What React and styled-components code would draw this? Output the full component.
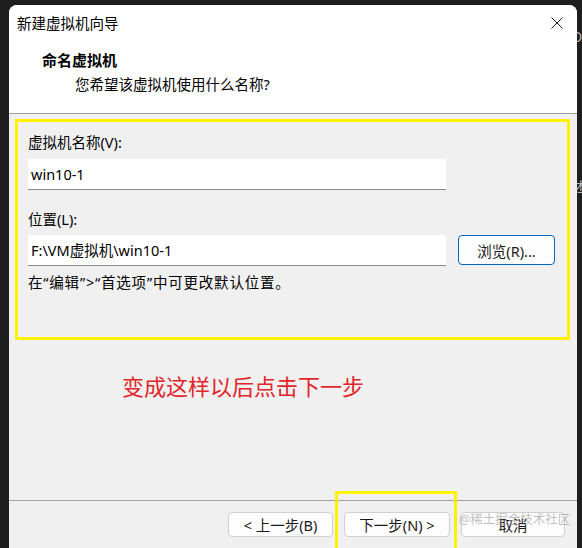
import React from "react";
import styled, { createGlobalStyle } from "styled-components";

const Global = createGlobalStyle`
  html, body { margin: 0; padding: 0; background: #1e1e1e; }
  body { font-family: "Noto Sans", "Noto Sans CJK SC", sans-serif; }
`;

const Desktop = styled.div`
  position: relative;
  width: 582px;
  height: 548px;
  overflow: hidden;
  background: #1e1e1e;
  padding: 5px 0 0 9px;
  box-sizing: border-box;
`;

const BackdropGlyph = styled.span`
  position: absolute;
  left: ${(p) => p.$x}px;
  top: ${(p) => p.$y}px;
  color: #b8b8b8;
  font-size: 14px;
  line-height: 1;
`;

const Dialog = styled.div`
  position: relative;
  z-index: 1;
  width: 568px;
  height: 560px;
  border-radius: 8px 8px 0 0;
  background: #f0f0f0;
  overflow: hidden;
  display: flex;
  flex-direction: column;
  color: #000;
  font-size: 14.5px;
`;

const TitleBar = styled.div`
  height: 36px;
  background: #fff;
  display: flex;
  align-items: center;
  justify-content: space-between;
  padding: 0 14px 0 8px;
`;

const TitleText = styled.span`
  font-size: 14.5px;
  line-height: 20px;
`;

const CloseIcon = styled.svg`
  width: 12px;
  height: 12px;
  display: block;
`;

const Header = styled.div`
  background: #fff;
  padding: 9px 0 19px 33px;
  border-bottom: 1px solid #a0a0a0;
  display: flex;
  flex-direction: column;
  gap: 4px;
`;

const HeaderTitle = styled.div`
  font-weight: 700;
  font-size: 15px;
  line-height: 20px;
`;

const HeaderSub = styled.div`
  padding-left: 33px;
  font-size: 14.5px;
  line-height: 20px;
`;

const Body = styled.div`
  flex: 1;
  display: flex;
  flex-direction: column;
  padding: 5px 0 0 6px;
`;

const Highlight = styled.div`
  width: 555px;
  height: 221px;
  box-sizing: border-box;
  border: 3px solid #fff200;
  padding: 10px 0 0 10px;
  display: flex;
  flex-direction: column;
`;

const Label = styled.div`
  line-height: 20px;
  margin-top: ${(p) => p.$mt || 0}px;
`;

const Row = styled.div`
  display: flex;
  align-items: flex-start;
  gap: 12px;
  margin-top: ${(p) => p.$mt || 0}px;
`;

const Field = styled.div`
  width: 415px;
  height: 30px;
  background: #fff;
  border-bottom: 1px solid #8a8a8a;
  display: flex;
  align-items: center;
  padding-left: 3px;
  box-sizing: content-box;
  line-height: 20px;
`;

const Button = styled.div`
  width: ${(p) => p.$w}px;
  height: ${(p) => p.$h}px;
  box-sizing: border-box;
  border: 1px solid ${(p) => (p.$primary ? "#0067c0" : "#d0d0d0")};
  border-radius: 4px;
  background: #fdfdfd;
  display: flex;
  align-items: center;
  justify-content: center;
  font-size: 14.5px;
  color: #1a1a1a;
`;

const Hint = styled.div`
  line-height: 20px;
  margin-top: 6px;
  letter-spacing: 0.8px;
`;

const Annotation = styled.div`
  color: #e0262a;
  font-size: 22px;
  line-height: 30px;
  margin: 31px 0 0 107px;
`;

const Footer = styled.div`
  position: relative;
  border-top: 1px solid #a0a0a0;
  height: 53px;
  display: flex;
  justify-content: flex-end;
  align-items: flex-start;
  gap: 11px;
  padding: 11px 12px 0 0;
`;

const NextHighlight = styled.div`
  position: absolute;
  left: 326px;
  top: -10px;
  width: 122px;
  height: 80px;
  box-sizing: border-box;
  border: 3px solid #fff200;
  pointer-events: none;
`;

const Watermark = styled.div`
  position: absolute;
  left: 450px;
  top: 10px;
  font-size: 12.5px;
  line-height: 18px;
  color: rgba(150, 150, 150, 0.6);
  white-space: nowrap;
`;

export default function App() {
  return (
    <>
      <Global />
      <Desktop>
        <BackdropGlyph $x={572} $y={30}>D</BackdropGlyph>
        <BackdropGlyph $x={572} $y={180}>述</BackdropGlyph>
        <Dialog>
          <TitleBar>
            <TitleText>新建虚拟机向导</TitleText>
            <CloseIcon viewBox="0 0 12 12">
              <path d="M0.5 0.5 L11.5 11.5 M11.5 0.5 L0.5 11.5" stroke="#1a1a1a" strokeWidth="1" fill="none" />
            </CloseIcon>
          </TitleBar>
          <Header>
            <HeaderTitle>命名虚拟机</HeaderTitle>
            <HeaderSub>您希望该虚拟机使用什么名称?</HeaderSub>
          </Header>
          <Body>
            <Highlight>
              <Label>虚拟机名称(V):</Label>
              <Row $mt={7}>
                <Field>win10-1</Field>
              </Row>
              <Label $mt={19}>位置(L):</Label>
              <Row $mt={6}>
                <Field>F:\VM虚拟机\win10-1</Field>
                <Button $w={97} $h={30} $primary>浏览(R)...</Button>
              </Row>
              <Hint>在“编辑”&gt;“首选项”中可更改默认位置。</Hint>
            </Highlight>
            <Annotation>变成这样以后点击下一步</Annotation>
          </Body>
          <Footer>
            <Button $w={105} $h={25}>&lt; 上一步(B)</Button>
            <Button $w={106} $h={25}>下一步(N) &gt;</Button>
            <Button $w={104} $h={25}>取消</Button>
            <NextHighlight />
            <Watermark>@稀土掘金技术社区</Watermark>
          </Footer>
        </Dialog>
      </Desktop>
    </>
  );
}
